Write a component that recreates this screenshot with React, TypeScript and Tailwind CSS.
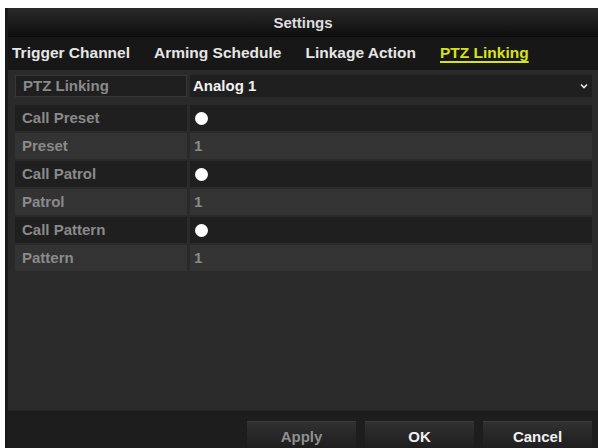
import { ReactNode } from 'react'

const rows = [
  { label: 'Call Preset', kind: 'dot', dark: true },
  { label: 'Preset', kind: 'num', dark: false },
  { label: 'Call Patrol', kind: 'dot', dark: true },
  { label: 'Patrol', kind: 'num', dark: false },
  { label: 'Call Pattern', kind: 'dot', dark: true },
  { label: 'Pattern', kind: 'num', dark: false },
]

const tabs = ['Trigger Channel', 'Arming Schedule', 'Linkage Action', 'PTZ Linking']

function Row({ dark, label, children }: { dark: boolean; label: string; children: ReactNode }) {
  const bg = dark ? 'bg-[#1f1f1f]' : 'bg-[#333333]'
  return (
    <div className="flex h-[28px] gap-[3px] py-[1px]">
      <div className={`w-[172px] flex items-center pl-[7px] text-[#8a8a8a] ${bg}`}>{label}</div>
      <div className={`flex-1 flex items-center pl-[4px] ${bg}`}>{children}</div>
    </div>
  )
}

export default function App() {
  return (
    <div
      className="w-[598px] h-[448px] bg-white pt-[8px] pl-[5px] overflow-hidden"
      style={{ fontFamily: '"Liberation Sans", Arial, sans-serif' }}
    >
      <div className="h-full flex flex-col bg-[#151515] border-l-[3px] border-[#1a1a1a]">
        {/* Title */}
        <div className="h-[28px] shrink-0 flex items-center justify-center pt-[2px] bg-gradient-to-b from-[#2a2a2a] to-[#0f0f0f] text-[15px] font-bold text-[#dedede]">
          Settings
        </div>

        {/* Tabs */}
        <div className="h-[34px] shrink-0 flex items-center gap-[24px] pl-[4px] pb-[2px] bg-[#171717] border-t border-[#0a0a0a] text-[15.5px] font-bold">
          {tabs.map((t, i) =>
            i === 3 ? (
              <span key={t} className="text-[#d8e21c] underline underline-offset-[3px] decoration-2">
                {t}
              </span>
            ) : (
              <span key={t} className="text-[#e6e6e6]">
                {t}
              </span>
            ),
          )}
        </div>

        {/* Content */}
        <div className="flex-1 bg-[#2a2a2a] pt-[5px] pl-[7px] pr-[6px] text-[15px] font-bold">
          <div className="flex h-[22px] gap-[3px]">
            <div className="w-[172px] flex items-center pl-[7px] text-[#8a8a8a] bg-[#1f1f1f] border border-[#363636]">
              PTZ Linking
            </div>
            <div className="flex-1 flex items-center justify-between pl-[3px] pr-[4px] bg-[#1f1f1f] text-[#f2f2f2]">
              <span>Analog 1</span>
              <svg width="8" height="6" viewBox="0 0 8 6">
                <path d="M1 1.5 L4 4.5 L7 1.5" stroke="#e8e8e8" strokeWidth="1.6" fill="none" />
              </svg>
            </div>
          </div>
          <div className="mt-[7px] flex flex-col">
            {rows.map((r) => (
              <Row key={r.label} dark={r.dark} label={r.label}>
                {r.kind === 'dot' ? (
                  <span className="w-[13px] h-[13px] rounded-full bg-white ml-[1px]" />
                ) : (
                  <span className="text-[#8a8a8a]">1</span>
                )}
              </Row>
            ))}
          </div>
        </div>

        {/* Footer */}
        <div className="h-[38px] shrink-0 bg-[#1d1d1d] border-t border-[#242424] flex justify-end gap-[9px] pt-[10px] pr-[6px]">
          {['Apply', 'OK', 'Cancel'].map((b) => (
            <div
              key={b}
              className={`w-[109px] h-[34px] flex items-start justify-center pt-[4px] bg-gradient-to-b from-[#303030] to-[#1a1a1a] border-t border-[#3c3c3c] text-[15px] font-bold ${
                b === 'Apply' ? 'text-[#8f8f8f]' : 'text-[#f0f0f0]'
              }`}
            >
              {b}
            </div>
          ))}
        </div>
      </div>
    </div>
  )
}
